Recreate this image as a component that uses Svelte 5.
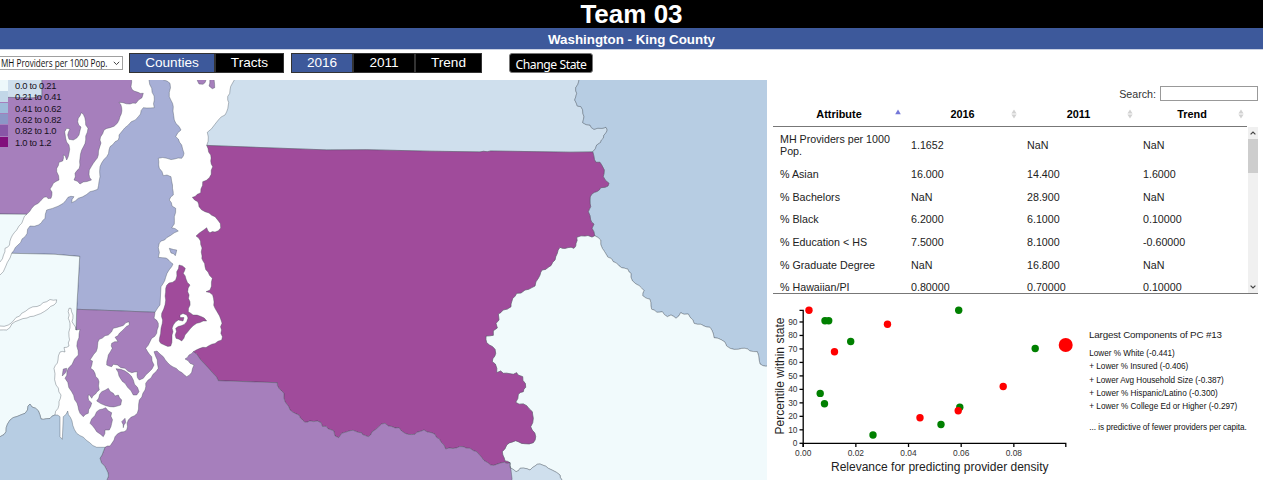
<script>
  // Shared county borders, each a list of "x,y" points in map space.
  const line = (s) => s.trim().split(/\s+/).map((p) => p.split(',').map(Number));
  const rev = (l) => [...l].reverse();

  // Adds a small kink to each medium-length coast segment; the same segment always bends the same way.
  function rough(pts) {
    const out = [];
    pts.forEach((p, i) => {
      out.push(p);
      const q = pts[(i + 1) % pts.length];
      const len = Math.hypot(q[0] - p[0], q[1] - p[1]);
      if (len < 5 || len > 18) return;
      const flip = p[0] < q[0] ? 1 : -1;
      for (const t of len > 9 ? [0.33, 0.67] : [0.5]) {
        const x = p[0] + (q[0] - p[0]) * t;
        const y = p[1] + (q[1] - p[1]) * t;
        const n = Math.sin(Math.round(x * 3) * 12.9 + Math.round(y * 3) * 78.2) * 0.8 * flip;
        out.push([x - ((q[1] - p[1]) / len) * n, y + ((q[0] - p[0]) / len) * n]);
      }
    });
    return 'M' + out.map((p) => p[0].toFixed(1) + ',' + p[1].toFixed(1)).join('L') + 'Z';
  }

  const kingNorth = line('206.7,145.4 260,147.5 326.7,149.9 366.7,149.7 430,151.2 480,151.9 490.7,151 570,152.2 592.7,151.9');
  const northEast = line('592.7,151.9 596.7,145 600.5,142.5 603.3,138.3 607.3,130 606,127.3 602,128.4 594,129.3 590,125 582.7,122.7 584,116.7 581,106.7 577.3,106 574.7,100 576.7,93.3 575.7,87.7 579,80');
  const kingEast = line('592.7,151.9 594,157 596,162.3 600,162.3 604.3,170 603.3,176.7 609,183.3 608,186 605,187.3 600.7,187.7 597,191.5 591.7,194.3 590,200 590.7,206.7 588.3,211.7 590.7,220 594,224 592,228.3 594.7,235.7');
  const farEast = line('594.7,235.7 600.7,240 602.3,248.3 606,254 613.3,261.7 621.7,267.7 628,269.3 631,273.3 632.3,280.7 636,284 644,290.7 642.7,295.7 650,299.3 651.7,309.3 656.7,312.3 662.3,311.7 667.3,316.7 671,315 676,318.3 680.7,312.7 684,314.3 688.3,314 694,323.3 701,324.3 710,327.3 714,337.7 721.7,340 730,348.3 738.3,349.3 745,348.3 750,351 757.3,351.7 760,364 763,365.7 769,365.5');
  const kingSouthEast = line('594.7,235.7 592,237 588,235.5 585,236 581,235.8 576.7,237.3 576,243.3 574,248.3 568,247.6 565,248.4 560,247.3 557.3,253.3 555,260 548.3,267.3 542,270 540,275 538.3,278.3 535,286 525,290 521,293 516.7,293.3 511.7,301.7 511,306.7 503,310 498.3,314 499,320 496,323.3 497.3,328 493.3,330.7 493.3,335.3 486,336 486.7,342.7 495,349.3 495.7,353.3 492.3,361.7 495.3,364 496.7,372.7 500.7,371 503.3,373.3 513.3,374.3 516.7,372.7 518,375 522.7,376.7 525.7,387.3 523.3,391.7 518.3,394.3 515.7,402.3 526.7,405.7 532.3,411.7 533.3,418.3 530.7,426.7 535.7,436.7 533.3,442.7 525,443.7 515.7,440.7 506.7,445 502.3,451.7 505,461 510,462.7');
  const kingSouth = line('510,462.7 507,463.5 501.7,462.7 497,464.2 490.7,465 484,460.5 476.7,451.7 470,448.3 463.3,446.7 453,448.5 445.7,449 441,442 435,434.3 424,430 420,431.5 415,434.3 405,433.3 399,427.7 395,427.9 388.3,426 385,423.3 381.7,424 375,430 368.3,436.7 362.5,434.5 361.7,432.7 356,431.5 350,430.7 341.7,433.3 338.7,437.7 335,436 334,431 328.3,429 326,426.3 322.5,426.5 321,422.6 317.3,421 310,420.9 305,422.3 299,415 290,410 285,401.7 284,393.3 279,388.3 277.3,382.7 218.3,380.7 216.5,377 200,359 193.3,351.7');
  const kingWest = line('193.3,351.7 200,348.3 206,347.5 215,343.5 221.7,340 221.5,330 221,320 215,308.3 214,302 212.7,295 206,291.7 210,290 212.3,278.3 208,272 205,266.7 203,261 202,256 202,248 200.5,241 196,236 203,230.5 206.7,227.7 208,231 210,232.7 215,232 218.3,230.7 220.7,228 220.3,223.5 215,216.7 209,213 205,211.7 199,206.7 197.7,201.7 192.3,197.3 197,194.5 200.7,192.7 202.7,181.7 209.3,177.7 212.7,166.7 210.7,161 210.7,155 206.7,145.4');
  const nwSouth = line('26.7,214.3 0,214 -3,214');
  const kitsapSouthA = line('11.7,253.3 55,254.3 79.7,256.4 76.7,309.3');
  const kitsapSouthB = line('76.7,309.3 115,310.7 155,312.3');
  const masonEast = line('76.7,309.3 76,330');
  const thurstonNorth = line('-3,437 0,436.7 4,434.5 6,431.7 7.5,424 10,420 17,416.5 25,413.3 27.5,410 28,406 30,404 32,407 38.3,410.7 40,415 41,419 43.3,419.3 50,418.5 55,415');
  const thurstonEast = line('105,447.3 103.5,451 100,458.3 101.5,463 106.7,470 108.5,476 107,483');

  const counties = [
    { fill: '#cfdfed', pts: line('-3,77 42,77 42,96.5 30,98 -3,98') },
    { fill: '#a67fbc', pts: [...line('42,77 131.7,77 131.7,82 131,86.7 134,91 138,92.3 143.3,93.3 142,97.7 138.5,100 136,103.3 130,104 123,102.7 119,102.3 121.7,107.7 120,116.7 117.3,123.3 110,127.7 104,130 100.5,137 101,143 98.3,155 93.3,163.3 89.3,170 89,174.3 91.5,180 87,181.5 80,184 74,180 75,173.3 79.3,168.3 80,158.3 81.7,150 85.7,140 88,128.3 85.7,125 83.3,114.3 81.3,112.7 78.3,118.3 78.7,125 81,127 79,135 73.3,140 69,139.3 67.7,135 70,129 66.7,128.3 64.7,131.7 65.7,138.3 69,145 69,153.3 66.7,160 65,155.6 63.3,155 62.7,161 59,162.3 56.7,171.7 59,180 53.3,183.3 50,189 52,192 51,198.3 48,198.6 46.5,196.8 44,197.3 38.3,203.3 31.7,208.3'), ...nwSouth, ...line('-3,97 30,98 42,96.5')] },
    { fill: '#f1fafc', pts: [...line('-3,214 26.7,214.3 23.3,219.3 19,226 16.7,230 11,238 9.5,245 5,248.3 3.5,255 0,262 -3,264')] },
    { fill: '#a7afd6', pts: [...line('149,77 149,80 151.7,88.3 154.3,100 154.3,107.7 143.3,107.7 138.3,116.7 128.3,125 119,135 118.3,140 110,146.7 106.7,156.7 100,166.7 99,181.7 97.7,189.3 90,191.7 78.3,198.3 71.7,202.7 74,196.7 68,197.3 63.3,203.3 46.7,210 45,218.3 38.3,225 30,226 25,236.7 18,245'), ...kitsapSouthA, ...kitsapSouthB, ...line('157,309 160,305 161,286.7 165.7,277.3 171.7,266.7 173,264 170,261.7 166,258 158.3,257.3 159.3,243 166.7,237.7 178.3,231 171.7,227.7 174.3,224 174.3,216.7 175.7,208.3 172,206 169.3,200 173.3,195 172.5,185 171,176.7 167,175 163.3,175.7 159.3,168.3 158.3,158.3 167,158.3 171,159.6 181.7,158.3 184,153.3 181.7,145 175.7,136.7 181,130 174.3,120 173.3,106.7 169.3,96.7 170,83.3 163.3,80 163,77')] },
    { fill: '#a7afd6', pts: line('169.3,248.3 173.5,249.5 176.7,250 175.3,255.7 171,253') },
    { fill: '#a67fbc', pts: line('196.7,77 197.5,81 199,84 203,84.3 206,80 206,77') },
    { fill: '#a67fbc', pts: line('209.3,77 209,86 212.3,88.7 214.7,87.7 214.7,77') },
    { fill: '#cfdfed', pts: [...line('235,77 234.3,80 230,90 227.7,100 228.3,105 225,115 218.3,120 207.3,132.3 208.3,137'), ...kingNorth, ...northEast, [579, 77]] },
    { fill: '#b7cde3', pts: [...rev(northEast), ...kingEast, ...farEast, ...line('769,77 579,77')] },
    { fill: '#f1fafc', pts: [...rev(kingSouthEast), ...farEast, ...line('769,483 562,483 562,480 560,475 548.3,468.3 540,464 535,466 530,470 520,468.3 516,471.7 511,468.3')] },
    { fill: '#cfdfed', pts: line('510,462.7 511,468.3 516,471.7 520,468.3 530,470 535,466 540,464 548.3,468.3 560,475 562,480 562,483 511,483') },
    { fill: '#a04b9b', pts: [...kingNorth, ...kingEast, ...kingSouthEast, ...kingSouth, ...kingWest] },
    { fill: '#a04b9b', pts: line('179,265 185.3,268.3 183.3,273.3 186,279 190,285 187.7,291.7 190,301.7 188.3,311.7 193,315 201,316.5 206.7,321 196.7,323.3 190,329 185,335 181.7,341 176,338.3 175.7,328.3 181,325.8 186.7,321.7 188,318 186.7,315 183,313.5 180,315 180,317.6 184,317.6 183,321 178.3,320 173.3,325 172,335 170.7,346 165,345.3 160.7,343.3 159.5,338.3 162.3,323.3 161.7,313.3 165.7,300 165.7,288.3 169,283 175.7,280 176.7,271.7') },
    { fill: '#a67fbc', pts: [...kitsapSouthB, ...line('154,318.3 158.3,323.3 156.7,333.3 150,341.7 145.7,348.3 151.7,356.7 154,365 149,372 143.3,378.3 139.3,380 137,375 137.3,371.7 131.7,372.7 125,368.3 113.3,364.3 111.7,366.7 106.7,365 108.3,355 112.3,348.3 111.7,343.3 118,341.7 115,337.3 122,331 129.3,325 129,321.7 120,326.5 113.3,328.3 108.3,335 99.3,339.3 97.3,348.3 92,357 90,360 92.5,361 90.7,368.3 95,373.3 99,381.7 99.3,390 95.5,394 91.7,398.3 89.5,395 88.3,395 88.5,400 91.7,403 88.3,413.3 83.3,416.7 80,413.3 77,403 71.7,391.7 65,378.3 68.3,368.3 78.3,355 77.3,341.7 80,329.3'), ...rev(masonEast)] },
    { fill: '#a67fbc', pts: line('116,368.7 120.7,369.3 128.3,373.3 133.3,380 139,391.7 136.7,395 133.3,395 125,383.3 119,376') },
    { fill: '#a67fbc', pts: line('108.3,388.3 113.3,393.3 115,396 118.3,395 121.7,400 120.7,405 110,406.7 96.7,401 101.7,391.7') },
    { fill: '#a67fbc', pts: line('105.7,407.7 111.7,412.7 111.7,423.3 109.3,430 105,430 103.3,436.7 96.7,431.7 90,423.3 96.7,411.7') },
    { fill: '#a67fbc', pts: line('125,418.3 125.7,422.7 123.3,427.7 121.7,421.7') },
    { fill: '#a67fbc', pts: line('63.3,369 66.7,368.3 65,373.3 62.3,376') },
    { fill: '#a67fbc', pts: [...line('154,351.7 157,351 163.3,356.7 170,365 179,371 186.7,376.7 191.7,372.3 194,365 190,363.3 185,359 189,355'), ...rev(kingSouth), ...line('511,470 511.5,483 107,483'), ...rev(thurstonEast), ...line('110,446 115,436.7 121,432 126.7,430 128.3,420 137.3,413.3 139.3,400 145,390 145.7,383.3 151,378 158.3,368.3 157.3,360')] },
    { fill: '#f1fafc', pts: [...kitsapSouthA, ...masonEast, ...line('72,321.7 73,315 71,308.3 69,308.3 68.3,318.3 70,323.3 69,336.7 69,346 64,347.5 65,352 60,352 58,360 54,368.3 56,385 61,395 59,405'), ...rev(thurstonNorth), ...line('-3,330 0,330 6.7,330 15,321.7 27,318 36.7,315 48,309 54,305 56.7,299.8 50,299.5 46.7,301.7 37,306.5 29,308.5 21.7,313.3 14,320 8.3,325 0,326 -3,326 -3,277 0,275 3.3,271.7 10,258')] },
    { fill: '#b7cde3', pts: [...thurstonNorth, ...line('60,416.7 60,436.7 62.3,439.3 63.3,416.7 67.7,411 72,421 76.7,433.3 86,440 96.7,447.3'), ...thurstonEast, [-3, 483]] }
  ];

  const bins = [
    ['#edf8fb', '0.0 to 0.21'],
    ['#c2d7e8', '0.21 to 0.41'],
    ['#9ebcda', '0.41 to 0.62'],
    ['#8c96c6', '0.62 to 0.82'],
    ['#8856a7', '0.82 to 1.0'],
    ['#810f7c', '1.0 to 1.2']
  ];

  const rows = [
    ['MH Providers per 1000 Pop.', '1.1652', 'NaN', 'NaN'],
    ['% Asian', '16.000', '14.400', '1.6000'],
    ['% Bachelors', 'NaN', '28.900', 'NaN'],
    ['% Black', '6.2000', '6.1000', '0.10000'],
    ['% Education < HS', '7.5000', '8.1000', '-0.60000'],
    ['% Graduate Degree', 'NaN', '16.800', 'NaN'],
    ['% Hawaiian/PI', '0.80000', '0.70000', '0.10000']
  ];

  const dots = [
    [809, 310.3, 'red'], [825, 320.7, 'green'], [828.7, 320.7, 'green'], [850.7, 341.5, 'green'],
    [834.5, 351.8, 'red'], [887.5, 324.2, 'red'], [820.2, 393.4, 'green'], [824.5, 403.8, 'green'],
    [873, 435, 'green'], [920, 417.7, 'red'], [941, 424.5, 'green'], [959.8, 407.2, 'green'],
    [958.2, 410.7, 'red'], [958.7, 310.3, 'green'], [1003.2, 386.5, 'red'], [1035.2, 348.5, 'green']
  ];
  const yTicks = [0, 10, 20, 30, 40, 50, 60, 70, 80, 90];
  const xTicks = [0, 0.02, 0.04, 0.06, 0.08];
  const notes = [
    'Lower % White (-0.441)',
    '+ Lower % Insured (-0.406)',
    '+ Lower Avg Household Size (-0.387)',
    '+ Lower % Hispanic/Latino (-0.300)',
    '+ Lower % College Ed or Higher (-0.297)'
  ];
</script>

<div class="page">
  <h1>Team 03</h1>
  <h2>Washington - King County</h2>

  <div class="toolbar">
    <div class="select">
      <svg width="108" height="12" viewBox="0 0 108 12"><text x="0" y="9.6" textLength="106.5" lengthAdjust="spacingAndGlyphs">MH Providers per 1000 Pop.</text></svg>
      <svg width="7" height="5" viewBox="0 0 7 5"><path d="M0.8 0.8 3.5 3.6 6.2 0.8" fill="none" stroke="#444" /></svg>
    </div>
    <div class="group level">
      <button class="on" style:width="86px">Counties</button><button style:width="69px">Tracts</button>
    </div>
    <div class="group years">
      <button class="on" style:width="62px">2016</button><button style:width="62px">2011</button><button style:width="67px">Trend</button>
    </div>
    <button class="change">Change State</button>
  </div>

  <div class="main">
    <div class="map">
      <svg width="767" height="400" viewBox="0 80 767 400">
        {#each counties as c}
          <path d={rough(c.pts)} fill={c.fill} stroke="#3c4650" stroke-opacity="0.45" stroke-width="0.8" stroke-linejoin="round" />
        {/each}
      </svg>
      <ul class="legend">
        {#each bins as [color, label]}
          <li><i style:background={color}></i>{label}</li>
        {/each}
      </ul>
    </div>

    <div class="side">
      <label class="search">Search:<input type="text" /></label>
      <div class="grid head">
        {#each ['Attribute', '2016', '2011', 'Trend'] as h, i}
          <div class="th">
            <span>{h}</span>
            <svg width="6" height="10" viewBox="0 0 6 10">
              {#if i === 0}
                <path d="M0.2 5.2 3 0.6 5.8 5.2Z" fill="#7477d8" />
              {:else}
                <path d="M0.4 4.4 3 0.5 5.6 4.4ZM0.4 5.6 3 9.5 5.6 5.6Z" fill="#d2d2d2" />
              {/if}
            </svg>
          </div>
        {/each}
      </div>
      <div class="body">
        <div class="rows">
          {#each rows as r}
            <div class="grid row">
              {#each r as cell}<div class="td">{cell}</div>{/each}
            </div>
          {/each}
        </div>
        <div class="bar">
          <svg width="6" height="4" viewBox="0 0 6 4"><path d="M0.6 3.4 3 1 5.4 3.4" fill="none" stroke="#444" stroke-width="1.2" /></svg>
          <div class="thumb"></div>
          <svg class="down" width="6" height="4" viewBox="0 0 6 4"><path d="M0.6 0.6 3 3 5.4 0.6" fill="none" stroke="#444" stroke-width="1.2" /></svg>
        </div>
      </div>

      <svg class="chart" width="496" height="184" viewBox="767 296 496 184">
        <path d="M799.5 310.3H803.2V443.3H1065.8V447M803.2 443.3V447" fill="none" stroke="#000" stroke-width="1.3" />
        {#each yTicks as t}
          <path d="M799.5 {443.3 - t * 1.348}H803" stroke="#000" stroke-width="1.3" />
          <text class="tick" x="797.5" y={446.3 - t * 1.348} text-anchor="end">{t}</text>
        {/each}
        {#each xTicks as t}
          <path d="M{803.2 + t * 2633} 443.3V447" stroke="#000" stroke-width="1.3" />
          <text class="tick" x={803.2 + t * 2633} y="455.6" text-anchor="middle">{t.toFixed(2)}</text>
        {/each}
        <text class="axis" x="831" y="471" textLength="217.5">Relevance for predicting provider density</text>
        <text class="axis" transform="translate(783.5 434.5) rotate(-90)" textLength="117">Percentile within state</text>
        {#each dots as [x, y, c]}
          <circle cx={x} cy={y} r="3.7" fill={c} />
        {/each}
        <circle cx="1065.7" cy="345" r="7" fill="red" />
        <text class="title" x="1089" y="338" textLength="133">Largest Components of PC #13</text>
        {#each notes as n, i}
          <text class="note" x="1089.3" y={355.8 + i * 13.35} textLength={[85.5, 99, 134.5, 128.5, 148][i]}>{n}</text>
        {/each}
        <text class="note" x="1089.3" y="430.3" textLength="157.5">... is predictive of fewer providers per capita.</text>
      </svg>
    </div>
  </div>
</div>

<style>
  :global(body) { background: #fff; overflow: hidden; }
  .page { width: 1263px; height: 480px; overflow: hidden; font-family: 'Liberation Sans', Arial, sans-serif; color: #222; }
  h1 { margin: 0; height: 28px; line-height: 28px; background: #000; color: #fff; font-size: 26px; text-align: center; }
  h2 { margin: 0; height: 22px; line-height: 23px; background: #3d599b; color: #fff; font-size: 13.35px; text-align: center; border-bottom: 1px solid #c9d0e2; box-sizing: border-box; }
  .toolbar { height: 30px; display: flex; align-items: flex-start; }
  .select { box-sizing: border-box; width: 124px; height: 14px; margin: 6px 6px 0 -1px; padding: 0 2px 0 1px; border: 1px solid #a0a0a0; display: flex; align-items: center; justify-content: space-between; }
  .select text { font: 10.2px 'Open Sans', 'Noto Sans', sans-serif; fill: #111; }
  .group { display: flex; margin-top: 3px; height: 20px; }
  .years { margin-left: 7px; }
  button { box-sizing: border-box; height: 20px; margin: 0; padding: 0 0 1px; border: 1px solid #333; background: #000; color: #fff; font: 13.6px 'Liberation Sans', Arial, sans-serif; text-align: center; }
  button.on { background: #3d599b; }
  button.change { width: 84px; margin: 3px 0 0 27px; border: 1px solid #777; border-radius: 3px; font: 12.2px 'Noto Sans', sans-serif; letter-spacing: -0.45px; line-height: 19px; padding: 1px 0 0; white-space: nowrap; }
  .main { display: flex; height: 400px; }
  .map { position: relative; width: 767px; height: 400px; flex: none; }
  .map > svg { display: block; }
  .legend { position: absolute; left: 0; top: 0; margin: 0; padding: 0; list-style: none; font-size: 9.4px; letter-spacing: -0.28px; color: #16101c; }
  .legend li { height: 11.33px; line-height: 12px; display: flex; align-items: flex-start; gap: 7px; white-space: nowrap; }
  .legend i { width: 8px; height: 10.5px; }
  .side { width: 496px; flex: none; }
  .search { display: flex; justify-content: flex-end; align-items: center; height: 15px; padding: 6px 5px 0 0; font-size: 10.7px; color: #333; gap: 4px; }
  .search input { box-sizing: border-box; width: 98px; height: 15px; border: 1px solid #999; margin: 0; padding: 0; }
  .grid { display: grid; grid-template-columns: 131px 116px 116px 111px; width: 474px; }
  .head { margin-left: 6px; height: 26px; border-bottom: 1px solid #777; box-sizing: border-box; font-weight: bold; font-size: 10.9px; color: #000; }
  .th { display: flex; align-items: center; height: 25px; padding: 1px 3px 0 10px; box-sizing: border-box; }
  .th span { flex: 1; text-align: center; }
  .th svg { flex: none; }
  .body { margin-left: 6px; width: 485px; height: 166px; border-bottom: 1px solid #777; display: flex; justify-content: space-between; overflow: hidden; }
  .row { min-height: 22.7px; align-items: center; font-size: 10.7px; line-height: 12px; color: #222; }
  .row:first-child { height: 35.6px; }
  .td { padding-left: 7px; }
  .bar { width: 10px; height: 166px; background: #f0f0f0; display: flex; flex-direction: column; align-items: center; padding-top: 4px; box-sizing: border-box; }
  .thumb { width: 10px; height: 34px; margin-top: 4px; background: #cdcdcd; }
  .down { margin-top: auto; margin-bottom: 4px; }
  .chart { display: block; margin-top: 2px; }
  .chart text { font-family: 'Liberation Sans', Arial, sans-serif; }
  .tick { font-size: 8.4px; fill: #333; }
  .axis { font-size: 12px; fill: #222; }
  .title { font-size: 9.8px; fill: #222; }
  .note { font-size: 8.2px; fill: #111; }
</style>
